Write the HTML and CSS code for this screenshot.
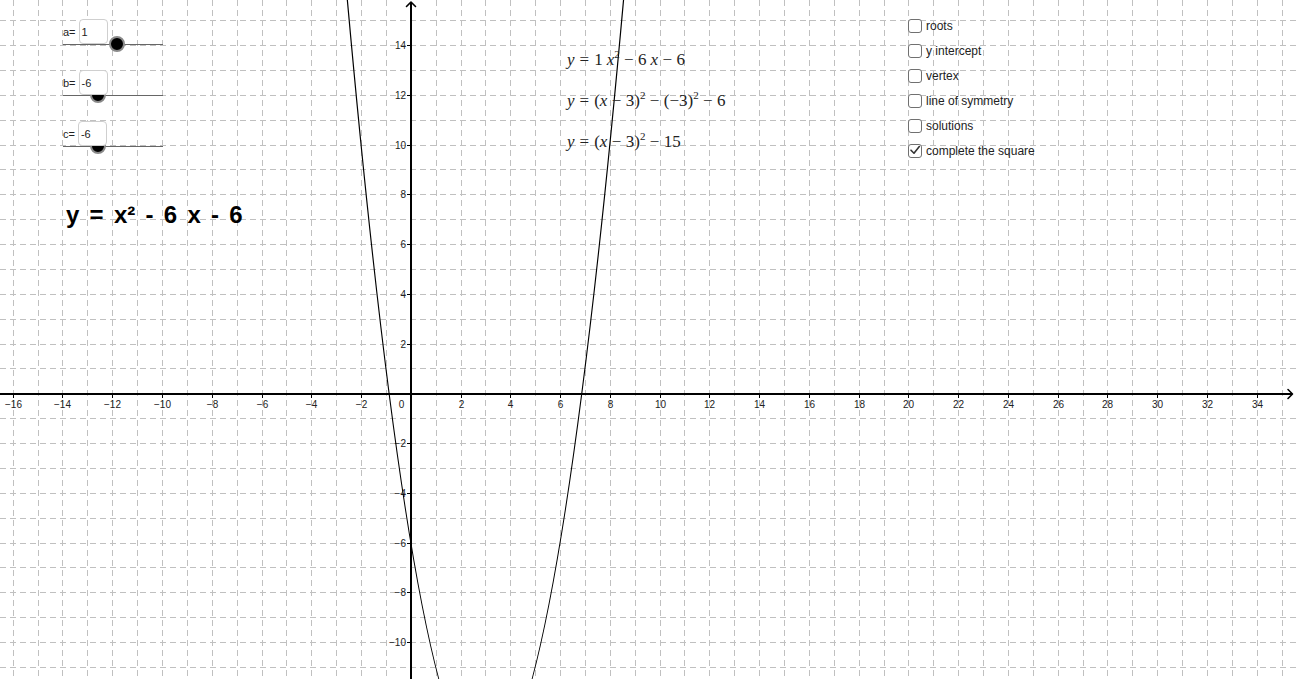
FILE: index.html
```html
<!DOCTYPE html>
<html lang="en">
<head>
<meta charset="utf-8">
<title>Completing the square</title>
<link rel="stylesheet" href="styles.css">
</head>
<body>
<div class="app">
  <svg id="plot" class="plot" width="1296" height="679" viewBox="0 0 1296 679">
    <g id="grid" class="grid"></g>
    <g id="axes" class="axes"></g>
    <g id="labels" class="labels"></g>
    <path id="curve" class="curve" d=""/>
  </svg>

  <div class="sliders">
    <div class="slider" style="--pos:53.7px">
      <span class="knob"></span>
      <div class="slider-head"><span class="slider-label">a=</span><span class="value-box">1</span></div>
    </div>
    <div class="slider" style="--pos:35.3px">
      <span class="knob"></span>
      <div class="slider-head"><span class="slider-label">b=</span><span class="value-box">-6</span></div>
    </div>
    <div class="slider" style="--pos:35px">
      <span class="knob"></span>
      <div class="slider-head"><span class="slider-label">c=</span><span class="value-box">-6</span></div>
    </div>
  </div>

  <div class="big-eq">y = x² - 6 x - 6</div>

  <div class="latex">
    <div class="tex-line"><i>y</i><span class="rel">=</span>1<span class="sp"></span><i>x</i><sup>2</sup><span class="bin">−</span>6<span class="sp"></span><i>x</i><span class="bin">−</span>6</div>
    <div class="tex-line"><i>y</i><span class="rel">=</span>(<i>x</i><span class="bin">−</span>3)<sup>2</sup><span class="bin">−</span>(−3)<sup>2</sup><span class="bin">−</span>6</div>
    <div class="tex-line"><i>y</i><span class="rel">=</span>(<i>x</i><span class="bin">−</span>3)<sup>2</sup><span class="bin">−</span>15</div>
  </div>

  <ul class="checks">
    <li class="check"><span class="box"></span><span class="check-label">roots</span></li>
    <li class="check"><span class="box"></span><span class="check-label">y intercept</span></li>
    <li class="check"><span class="box"></span><span class="check-label">vertex</span></li>
    <li class="check"><span class="box"></span><span class="check-label">line of symmetry</span></li>
    <li class="check"><span class="box"></span><span class="check-label">solutions</span></li>
    <li class="check"><span class="box is-checked"><svg class="tick" viewBox="0 0 14 14" width="14" height="14"><polyline points="3,7.2 6,10.2 11.3,3.6"/></svg></span><span class="check-label">complete the square</span></li>
  </ul>
</div>
<script src="plot.js"></script>
</body>
</html>
```

FILE: styles.css
```css
html, body {
  margin: 0;
  padding: 0;
  background: #ffffff;
}

body {
  font-family: "Liberation Sans", Arial, sans-serif;
  color: #222;
  overflow: hidden;
}

.app {
  position: relative;
  width: 1296px;
  height: 679px;
  overflow: hidden;
}

.plot {
  position: absolute;
  left: 0;
  top: 0;
  display: block;
}

.grid line {
  stroke: #c0c0c0;
  stroke-width: 1;
  stroke-dasharray: 6 4;
}

.axes .axis {
  stroke: #000;
  stroke-width: 2;
  fill: none;
}

.axes .arrow {
  stroke: #000;
  stroke-width: 1.6;
  fill: none;
  stroke-linecap: round;
  stroke-linejoin: round;
}

.axes .tickmark {
  stroke: #000;
  stroke-width: 1;
}

.labels text {
  font-family: "Liberation Sans", Arial, sans-serif;
  font-size: 10px;
  fill: #222;
}

.curve {
  fill: none;
  stroke: #000;
  stroke-width: 1.2;
}

/* sliders */
.sliders {
  position: absolute;
  left: 63px;
  top: 19px;
  display: flex;
  flex-direction: column;
  gap: 25px;
}

.slider {
  position: relative;
  width: 100px;
  height: 25px;
  border-bottom: 1px solid #666;
}

.knob {
  position: absolute;
  left: calc(var(--pos) - 8px);
  top: 17px;
  width: 12px;
  height: 12px;
  border-radius: 50%;
  background: #000;
  border: 2px solid #8a8a8a;
  z-index: 1;
}

.slider-head {
  position: relative;
  z-index: 2;
  display: flex;
  align-items: center;
  height: 25px;
  font-size: 11px;
  gap: 3px;
}

.slider-label {
  line-height: 1;
  padding-top: 2px;
}

.value-box {
  box-sizing: border-box;
  width: 29px;
  height: 25px;
  border: 1px solid #cfcfcf;
  border-radius: 4px;
  background: #fff;
  padding-left: 2px;
  padding-top: 1px;
  line-height: 23px;
  font-size: 11px;
  color: #222;
}

/* big equation */
.big-eq {
  position: absolute;
  left: 66px;
  top: 203px;
  font-size: 24px;
  font-weight: bold;
  line-height: 24px;
  color: #000;
  white-space: pre;
  word-spacing: 3.6px;
}

/* latex block */
.latex {
  position: absolute;
  left: 567px;
  top: 39px;
  font-family: "Liberation Serif", "Times New Roman", serif;
  font-size: 17px;
  color: #222;
}

.tex-line {
  height: 41px;
  line-height: 41px;
  white-space: nowrap;
}

.tex-line i {
  font-style: italic;
}

.tex-line sup {
  font-size: 11px;
  vertical-align: 7px;
  line-height: 0;
}

.rel {
  margin: 0 5px;
}

.bin {
  margin: 0 4.4px;
}

.sp {
  display: inline-block;
  width: 4px;
}

/* checkboxes */
.checks {
  position: absolute;
  left: 908px;
  top: 13px;
  margin: 0;
  padding: 0;
  list-style: none;
}

.check {
  display: flex;
  align-items: center;
  gap: 4px;
  height: 25px;
}

.box {
  box-sizing: border-box;
  width: 14px;
  height: 14px;
  border: 1.5px solid #707070;
  border-radius: 3px;
  background: #fff;
  position: relative;
}

.tick {
  position: absolute;
  left: -1.5px;
  top: -1.5px;
}

.tick polyline {
  fill: none;
  stroke: #333;
  stroke-width: 1.6;
  stroke-linecap: round;
  stroke-linejoin: round;
}

.check-label {
  font-size: 12px;
  color: #222;
  line-height: 1;
}
```

FILE: plot.js
```js
(function () {
  var NS = 'http://www.w3.org/2000/svg';
  var S = 24.88, OX = 410.8, OY = 393.3, W = 1296, H = 679;
  var AX = 411, AY = 394;

  function mk(tag, attrs, parent, text) {
    var e = document.createElementNS(NS, tag);
    for (var k in attrs) e.setAttribute(k, attrs[k]);
    if (text != null) e.textContent = text;
    parent.appendChild(e);
    return e;
  }
  function num(v) { return v < 0 ? '\u2212' + Math.abs(v) : String(v); }

  var grid = document.getElementById('grid');
  var axes = document.getElementById('axes');
  var labels = document.getElementById('labels');

  for (var i = -17; i <= 36; i++) {
    if (i === 0) continue;
    var gx = Math.round(OX + i * S) + 0.5;
    if (gx < 0 || gx > W) continue;
    mk('line', { x1: gx, y1: 0, x2: gx, y2: H }, grid);
  }
  for (var j = -12; j <= 16; j++) {
    if (j === 0) continue;
    var gy = Math.round(OY - j * S) + 0.5;
    if (gy < 0 || gy > H) continue;
    mk('line', { x1: 0, y1: gy, x2: W, y2: gy }, grid);
  }

  mk('line', { class: 'axis', x1: 0, y1: AY, x2: 1292, y2: AY }, axes);
  mk('line', { class: 'axis', x1: AX, y1: 2, x2: AX, y2: H }, axes);
  mk('polyline', { class: 'arrow', points: '406.5,6.5 411,2 415.5,6.5' }, axes);
  mk('polyline', { class: 'arrow', points: '1288,389.5 1292.5,394 1288,398.5' }, axes);

  for (var a = -16; a <= 34; a += 2) {
    if (a === 0) continue;
    var tx = Math.round(OX + a * S) + 0.5;
    mk('line', { class: 'tickmark', x1: tx, y1: AY, x2: tx, y2: AY + 4 }, axes);
    mk('text', { x: tx, y: 408, 'text-anchor': 'middle' }, labels, num(a));
  }
  for (var b = -10; b <= 14; b += 2) {
    if (b === 0) continue;
    var ty = Math.round(OY - b * S) + 0.5;
    mk('line', { class: 'tickmark', x1: 407, y1: ty, x2: AX, y2: ty }, axes);
    mk('text', { x: 406, y: ty + 3.5, 'text-anchor': 'end' }, labels, num(b));
  }
  mk('text', { x: 401.5, y: 408, 'text-anchor': 'middle' }, labels, '0');

  // y = x^2 - 6x - 6 as an exact quadratic Bezier
  function f(x) { return x * x - 6 * x - 6; }
  function px(x) { return OX + x * S; }
  function py(y) { return OY - y * S; }
  var x0 = -3, x1 = 9;
  var cx = (x0 + x1) / 2;
  var cy = f(x0) + (2 * x0 - 6) * (x1 - x0) / 2;
  var d = 'M' + px(x0).toFixed(2) + ' ' + py(f(x0)).toFixed(2) +
          ' Q' + px(cx).toFixed(2) + ' ' + py(cy).toFixed(2) +
          ' ' + px(x1).toFixed(2) + ' ' + py(f(x1)).toFixed(2);
  document.getElementById('curve').setAttribute('d', d);
})();
```
